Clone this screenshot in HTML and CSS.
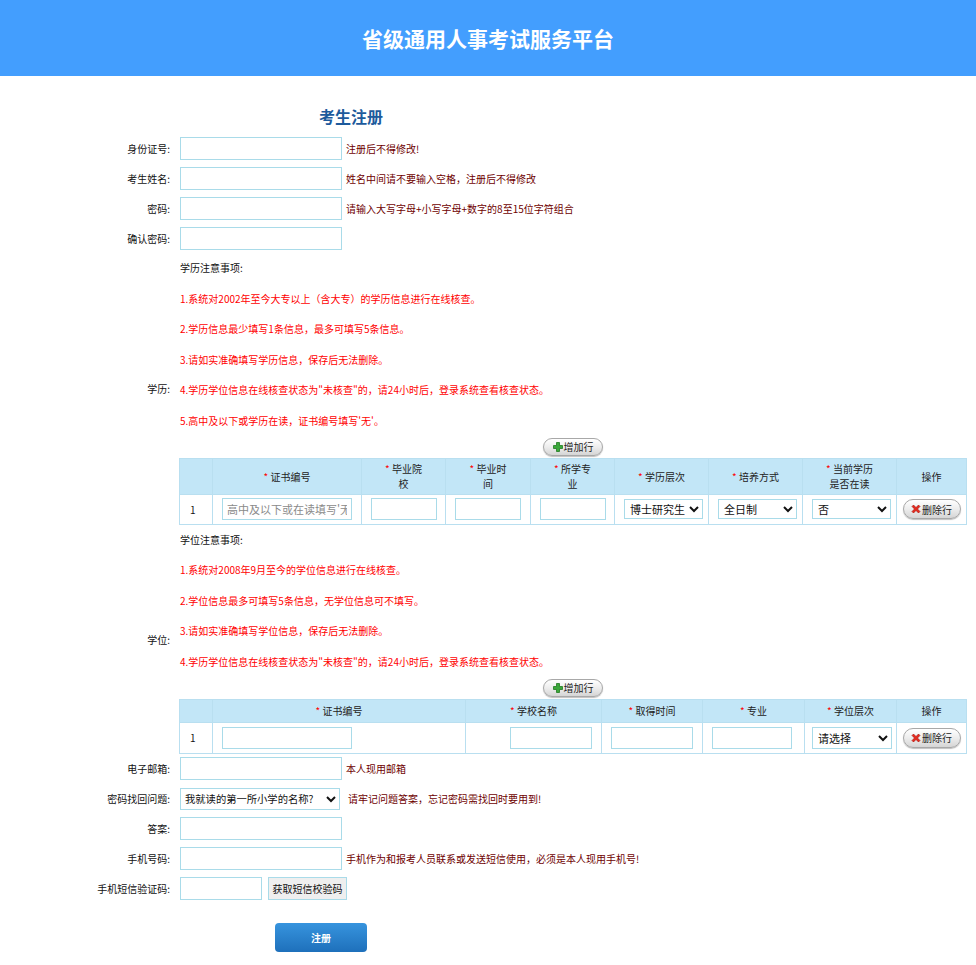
FILE: index.html
```html
<!DOCTYPE html>
<html lang="zh-CN">
<head>
<meta charset="utf-8">
<title>考生注册</title>
<link rel="stylesheet" href="styles.css">
</head>
<body>
<header class="top"><h1>省级通用人事考试服务平台</h1></header>
<main class="page">
  <h2 class="page-title">考生注册</h2>
  <div class="form">
    <div class="row"><span class="lbl">身份证号:</span><div class="fld"><input class="txt" type="text"><span class="hint">注册后不得修改!</span></div></div>
    <div class="row"><span class="lbl">考生姓名:</span><div class="fld"><input class="txt" type="text"><span class="hint">姓名中间请不要输入空格，注册后不得修改</span></div></div>
    <div class="row"><span class="lbl">密码:</span><div class="fld"><input class="txt" type="password"><span class="hint">请输入大写字母+小写字母+数字的8至15位字符组合</span></div></div>
    <div class="row"><span class="lbl">确认密码:</span><div class="fld"><input class="txt" type="password"></div></div>

    <div class="sec sec-edu">
      <span class="lbl sec-lbl">学历:</span>
      <div class="sec-body">
        <div class="note-title">学历注意事项:</div>
        <div class="note">1.系统对2002年至今大专以上（含大专）的学历信息进行在线核查。</div>
        <div class="note">2.学历信息最少填写1条信息，最多可填写5条信息。</div>
        <div class="note">3.请如实准确填写学历信息，保存后无法删除。</div>
        <div class="note">4.学历学位信息在线核查状态为"未核查"的，请24小时后，登录系统查看核查状态。</div>
        <div class="note">5.高中及以下或学历在读，证书编号填写'无'。</div>
        <div class="add-wrap">
          <button class="pill-btn add-btn" type="button"><svg class="ico" viewBox="0 0 10 10" width="10" height="10"><path d="M3.5 0.5h3v3h3v3h-3v3h-3v-3h-3v-3h3z" fill="#3aa83a" stroke="#1f7a1f" stroke-width="0.8"/></svg>增加行</button>
        </div>
        <table class="grid edu">
          <colgroup><col style="width:33px"><col style="width:149px"><col style="width:84px"><col style="width:85px"><col style="width:84px"><col style="width:94px"><col style="width:94px"><col style="width:94px"><col style="width:70px"></colgroup>
          <thead>
            <tr>
              <th></th>
              <th><span class="star">*</span> 证书编号</th>
              <th><span class="star">*</span> 毕业院<br>校</th>
              <th><span class="star">*</span> 毕业时<br>间</th>
              <th><span class="star">*</span> 所学专<br>业</th>
              <th><span class="star">*</span> 学历层次</th>
              <th><span class="star">*</span> 培养方式</th>
              <th><span class="star">*</span> 当前学历<br>是否在读</th>
              <th>操作</th>
            </tr>
          </thead>
          <tbody>
            <tr>
              <td class="num">1</td>
              <td><input class="cell-in w130" type="text" placeholder="高中及以下或在读填写'无'"></td>
              <td><input class="cell-in w66" type="text"></td>
              <td><input class="cell-in w66" type="text"></td>
              <td><input class="cell-in w66" type="text"></td>
              <td class="sel-cell"><select class="cell-sel"><option>博士研究生</option></select></td>
              <td class="sel-cell"><select class="cell-sel"><option>全日制</option></select></td>
              <td class="sel-cell"><select class="cell-sel"><option>否</option></select></td>
              <td><button class="pill-btn del-btn" type="button"><svg class="ico" viewBox="0 0 10 10" width="10" height="10"><path d="M1 2.5l1.5-1.5 2.5 2.5 2.5-2.5 1.5 1.5-2.5 2.5 2.5 2.5-1.5 1.5-2.5-2.5-2.5 2.5-1.5-1.5 2.5-2.5z" fill="#e52a1e" stroke="#a30e06" stroke-width="0.6"/></svg>删除行</button></td>
            </tr>
          </tbody>
        </table>
      </div>
    </div>

    <div class="sec sec-deg">
      <span class="lbl sec-lbl">学位:</span>
      <div class="sec-body">
        <div class="note-title">学位注意事项:</div>
        <div class="note">1.系统对2008年9月至今的学位信息进行在线核查。</div>
        <div class="note">2.学位信息最多可填写5条信息，无学位信息可不填写。</div>
        <div class="note">3.请如实准确填写学位信息，保存后无法删除。</div>
        <div class="note">4.学历学位信息在线核查状态为"未核查"的，请24小时后，登录系统查看核查状态。</div>
        <div class="add-wrap">
          <button class="pill-btn add-btn" type="button"><svg class="ico" viewBox="0 0 10 10" width="10" height="10"><path d="M3.5 0.5h3v3h3v3h-3v3h-3v-3h-3v-3h3z" fill="#3aa83a" stroke="#1f7a1f" stroke-width="0.8"/></svg>增加行</button>
        </div>
        <table class="grid deg">
          <colgroup><col style="width:33px"><col style="width:253px"><col style="width:136px"><col style="width:101px"><col style="width:102px"><col style="width:92px"><col style="width:70px"></colgroup>
          <thead>
            <tr>
              <th></th>
              <th><span class="star">*</span> 证书编号</th>
              <th><span class="star">*</span> 学校名称</th>
              <th><span class="star">*</span> 取得时间</th>
              <th><span class="star">*</span> 专业</th>
              <th><span class="star">*</span> 学位层次</th>
              <th>操作</th>
            </tr>
          </thead>
          <tbody>
            <tr>
              <td class="num">1</td>
              <td class="lft"><input class="cell-in w130" type="text"></td>
              <td class="lft shift"><input class="cell-in w82" type="text"></td>
              <td class="lft"><input class="cell-in w82" type="text"></td>
              <td class="lft"><input class="cell-in w80" type="text"></td>
              <td class="lft sel8"><select class="cell-sel w80s"><option>请选择</option></select></td>
              <td><button class="pill-btn del-btn" type="button"><svg class="ico" viewBox="0 0 10 10" width="10" height="10"><path d="M1 2.5l1.5-1.5 2.5 2.5 2.5-2.5 1.5 1.5-2.5 2.5 2.5 2.5-1.5 1.5-2.5-2.5-2.5 2.5-1.5-1.5 2.5-2.5z" fill="#e52a1e" stroke="#a30e06" stroke-width="0.6"/></svg>删除行</button></td>
            </tr>
          </tbody>
        </table>
      </div>
    </div>

    <div class="row"><span class="lbl">电子邮箱:</span><div class="fld"><input class="txt" type="text"><span class="hint">本人现用邮箱</span></div></div>
    <div class="row"><span class="lbl">密码找回问题:</span><div class="fld gap8"><select class="q-sel"><option>我就读的第一所小学的名称?</option></select><span class="hint">请牢记问题答案，忘记密码需找回时要用到!</span></div></div>
    <div class="row"><span class="lbl">答案:</span><div class="fld"><input class="txt" type="text"></div></div>
    <div class="row"><span class="lbl">手机号码:</span><div class="fld"><input class="txt" type="text"><span class="hint">手机作为和报考人员联系或发送短信使用，必须是本人现用手机号!</span></div></div>
    <div class="row"><span class="lbl">手机短信验证码:</span><div class="fld gap6"><input class="txt short" type="text"><button class="sms-btn" type="button">获取短信校验码</button></div></div>
    <div class="submit-wrap"><button class="submit" type="button">注册</button></div>
  </div>
</main>
</body>
</html>
```
FILE: styles.css
```css
* { box-sizing: border-box; }
body {
  margin: 0;
  font-family: "Noto Sans CJK SC", "Noto Sans", sans-serif;
  font-size: 10px;
  color: #111;
  background: #fff;
}
.top {
  height: 76px;
  background: #439efe;
  display: flex;
  align-items: center;
  justify-content: center;
}
.top h1 {
  margin: 0;
  color: #fff;
  font-size: 21px;
  font-weight: 700;
  line-height: 1;
}
.page-title {
  margin: 0;
  height: 57px;
  padding: 30px 0 0 319px;
  font-size: 16px;
  line-height: 20px;
  font-weight: 700;
  color: #1d5a9c;
}
.row {
  display: flex;
  align-items: center;
  height: 30px;
}
.lbl {
  flex: none;
  width: 170px;
  margin-right: 10px;
  text-align: right;
  color: #111;
}
.fld {
  display: flex;
  align-items: center;
  gap: 4px;
}
.fld.gap8 { gap: 8px; }
.fld.gap6 { gap: 6px; }
.txt {
  width: 162px;
  height: 23px;
  border: 1px solid #a9dbe9;
  padding: 0 3px;
  font: inherit;
  font-size: 11px;
  outline: none;
  background: #fff;
}
.txt.short { width: 82px; }
.hint { color: #6e0000; }
.q-sel {
  width: 160px;
  height: 22px;
  border: 1px solid #a9dbe9;
  font: inherit;
  font-size: 10.3px;
  color: #111;
  background: #fff;
  padding: 0;
}
.sms-btn {
  width: 79px;
  height: 23px;
  border: 1px solid #a9dbe9;
  background: #efefef;
  font: inherit;
  font-size: 10px;
  color: #111;
  padding: 0;
}
.sec { display: flex; }
.sec-lbl { align-self: center; }
.sec-body { flex: none; width: 786px; }
.note-title, .note {
  line-height: 30.6px;
  height: 30.6px;
  white-space: nowrap;
}
.note { color: #ff0000; }
.add-wrap {
  display: flex;
  justify-content: center;
  padding: 1px 0 2px;
}
.pill-btn {
  display: inline-flex;
  align-items: center;
  justify-content: center;
  gap: 1px;
  border: 1px solid #a8a8a8;
  background: linear-gradient(#ffffff, #ededed 50%, #d5d5d5);
  box-shadow: 0 1px 1px rgba(0, 0, 0, 0.25);
  font: inherit;
  font-size: 10px;
  color: #222;
  padding: 0;
}
.add-btn { width: 60px; height: 18px; border-radius: 9px; }
.del-btn { width: 58px; height: 20px; border-radius: 10px; }
.ico { flex: none; }
.grid {
  border-collapse: collapse;
  table-layout: fixed;
  width: 787px;
  margin-left: -1px;
}
.grid th, .grid td {
  border: 1px solid #b9dff0;
  padding: 0;
  text-align: center;
  font-weight: normal;
}
.grid th {
  background: #c2e6f7;
  line-height: 15px;
  color: #222;
}
.star { color: #ff0000; }
.edu thead tr { height: 36px; }
.edu tbody tr { height: 30px; }
.deg thead tr { height: 23px; }
.deg tbody tr { height: 31px; }
.grid td.num { text-align: left; padding-left: 10px; }
.grid td.lft { text-align: left; padding-left: 9px; }
.grid td.shift { padding-left: 44px; }
.grid td.sel8 { padding-left: 7px; }
.grid td.sel-cell { text-align: left; padding-left: 9px; }
.cell-in {
  display: block;
  height: 22px;
  border: 1px solid #a9dbe9;
  padding: 0 4px;
  font: inherit;
  font-size: 11px;
  outline: none;
  background: #fff;
}
.edu .cell-in { margin: 0 auto; }
.cell-in::placeholder { color: #8a8a8a; }
.w130 { width: 130px; }
.w66 { width: 66px; }
.w82 { width: 82px; }
.w80 { width: 80px; }
.cell-sel {
  display: block;
  width: 79px;
  height: 20px;
  border: 1px solid #a9dbe9;
  font: inherit;
  font-size: 11px;
  color: #111;
  background: #fff;
  padding: 0 1px;
}
.cell-sel.w80s { width: 80px; height: 22px; }
.grid .del-btn { margin: 0 auto; display: flex; }
.submit-wrap { padding: 19px 0 14px 275px; }
.submit {
  width: 92px;
  height: 29px;
  border: 0;
  border-radius: 4px;
  background: linear-gradient(#3794de, #1e70bb);
  color: #fff;
  font: inherit;
  font-size: 10px;
  font-weight: 700;
  padding: 0;
}
```
